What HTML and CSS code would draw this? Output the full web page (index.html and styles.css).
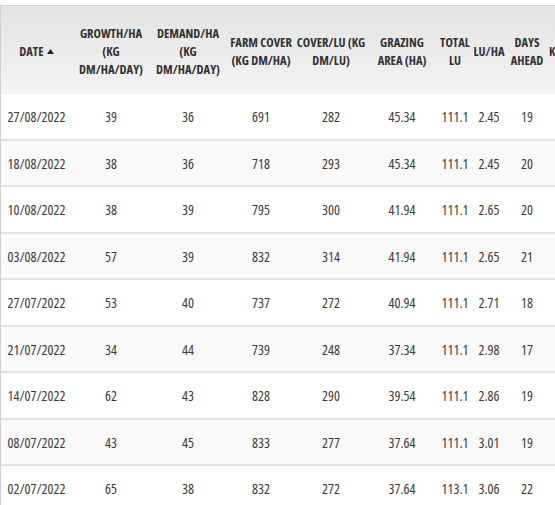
FILE: index.html
```html
<!DOCTYPE html>
<html lang="en">
<head>
<meta charset="utf-8">
<title>Grass cover history</title>
<link rel="stylesheet" href="styles.css">
</head>
<body>
<div class="grid-wrap">
  <table class="grid">
    <colgroup>
      <col class="c-date"><col class="c-growth"><col class="c-demand"><col class="c-farm"><col class="c-cover"><col class="c-area"><col class="c-total"><col class="c-luha"><col class="c-days"><col class="c-k">
    </colgroup>
    <thead>
      <tr>
        <th>DATE <svg class="sort" width="7" height="5" viewBox="0 0 7 5"><path d="M0 5 L3.5 0 L7 5 Z" fill="#222"/></svg></th>
        <th>GROWTH/HA<br>(KG<br>DM/HA/DAY)</th>
        <th>DEMAND/HA<br>(KG<br>DM/HA/DAY)</th>
        <th>FARM COVER<br>(KG DM/HA)</th>
        <th>COVER/LU (KG<br>DM/LU)</th>
        <th>GRAZING<br>AREA (HA)</th>
        <th>TOTAL<br>LU</th>
        <th>LU/HA</th>
        <th>DAYS<br>AHEAD</th>
        <th class="k">KG DM/DAY</th>
      </tr>
    </thead>
    <tbody>
      <tr><td>27/08/2022</td><td>39</td><td>36</td><td>691</td><td>282</td><td>45.34</td><td>111.1</td><td>2.45</td><td>19</td><td></td></tr>
      <tr><td>18/08/2022</td><td>38</td><td>36</td><td>718</td><td>293</td><td>45.34</td><td>111.1</td><td>2.45</td><td>20</td><td></td></tr>
      <tr><td>10/08/2022</td><td>38</td><td>39</td><td>795</td><td>300</td><td>41.94</td><td>111.1</td><td>2.65</td><td>20</td><td></td></tr>
      <tr><td>03/08/2022</td><td>57</td><td>39</td><td>832</td><td>314</td><td>41.94</td><td>111.1</td><td>2.65</td><td>21</td><td></td></tr>
      <tr><td>27/07/2022</td><td>53</td><td>40</td><td>737</td><td>272</td><td>40.94</td><td>111.1</td><td>2.71</td><td>18</td><td></td></tr>
      <tr><td>21/07/2022</td><td>34</td><td>44</td><td>739</td><td>248</td><td>37.34</td><td>111.1</td><td>2.98</td><td>17</td><td></td></tr>
      <tr><td>14/07/2022</td><td>62</td><td>43</td><td>828</td><td>290</td><td>39.54</td><td>111.1</td><td>2.86</td><td>19</td><td></td></tr>
      <tr><td>08/07/2022</td><td>43</td><td>45</td><td>833</td><td>277</td><td>37.64</td><td>111.1</td><td>3.01</td><td>19</td><td></td></tr>
      <tr><td>02/07/2022</td><td>65</td><td>38</td><td>832</td><td>272</td><td>37.64</td><td>113.1</td><td>3.06</td><td>22</td><td></td></tr>
    </tbody>
  </table>
</div>
</body>
</html>
```
FILE: styles.css
```css
html, body {
  margin: 0;
  padding: 0;
  background: #fff;
  overflow: hidden;
}

body {
  font-family: "Open Sans", "Noto Sans", "Liberation Sans", sans-serif;
  font-stretch: 75%;
  color: #333;
}

.grid-wrap {
  margin-top: 5px;
  border-left: 1px solid #cfcfcf;
  width: 700px;
}

.grid {
  table-layout: fixed;
  border-collapse: collapse;
  width: 607px;
}

.c-date { width: 71px; }
.c-growth { width: 78px; }
.c-demand { width: 76px; }
.c-farm { width: 70px; }
.c-cover { width: 70px; }
.c-area { width: 72px; }
.c-total { width: 34px; }
.c-luha { width: 34px; }
.c-days { width: 42px; }
.c-k { width: 60px; }

.grid th {
  height: 85px;
  padding: 3px 0 0;
  border-top: 1px solid #d2d2d2;
  background: linear-gradient(#e3e3e3, #f3f3f3);
  font-size: 12.5px;
  font-weight: 700;
  line-height: 18px;
  color: #333;
  text-align: center;
  vertical-align: middle;
  white-space: nowrap;
}

.grid th.k {
  text-align: left;
  padding-left: 1px;
}

.sort {
  vertical-align: 2px;
  margin-left: 1px;
}

.grid td {
  height: 42.5px;
  padding: 2px 0 0;
  border-bottom: 2px solid #e2e2e2;
  font-size: 14px;
  line-height: 18px;
  color: #3a3a3a;
  text-align: center;
  vertical-align: middle;
  white-space: nowrap;
}

.grid tbody tr:nth-child(even) td {
  background: #f9f9f9;
}
```
